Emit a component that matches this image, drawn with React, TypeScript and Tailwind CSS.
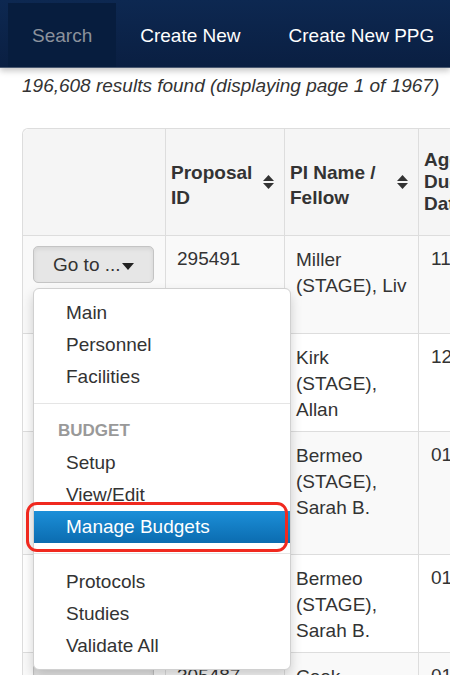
import React from 'react';

type Row = { id: string; name: string[]; due: string; h: string; striped: boolean };

const ROWS: Row[] = [
  { id: '295491', name: ['Miller', '(STAGE), Liv'], due: '11/30/2018', h: 'h-[98px]', striped: true },
  { id: '295490', name: ['Kirk', '(STAGE),', 'Allan'], due: '12/01/2018', h: 'h-[98px]', striped: false },
  { id: '295489', name: ['Bermeo', '(STAGE),', 'Sarah B.'], due: '01/02/2019', h: 'h-[123px]', striped: true },
  { id: '295488', name: ['Bermeo', '(STAGE),', 'Sarah B.'], due: '01/02/2019', h: 'h-[98px]', striped: false },
  { id: '305487', name: ['Cook', '(STAGE),', 'Tim'], due: '01/15/2019', h: 'h-[98px]', striped: true },
];

function SortIcon() {
  return (
    <svg width="11" height="14" viewBox="0 0 11 14" className="self-center shrink-0 mr-[10px]">
      <path d="M5.5 0 L11 6 L0 6 Z" fill="#333" />
      <path d="M0 8 L11 8 L5.5 14 Z" fill="#333" />
    </svg>
  );
}

function GoButton() {
  return (
    <button className="w-[121px] h-[37px] flex items-center pl-[19px] bg-[#e6e6e6] border border-[#c4c4c4] rounded-[5px] shadow-[inset_0_2px_4px_rgba(0,0,0,0.08)] text-[19px] text-[#333] whitespace-nowrap">
      <span>Go to ...</span>
      <span className="ml-[1px] mt-[4px] w-0 h-0 border-t-[7px] border-t-[#222] border-x-[6px] border-x-transparent" />
    </button>
  );
}

function MenuItem({ label, active }: { label: string; active?: boolean }) {
  return (
    <div
      className={
        active
          ? 'h-[32px] flex items-center pl-[32px] text-[19px] text-white bg-gradient-to-b from-[#1c8fd8] to-[#0b6cb0]'
          : 'h-[32px] flex items-center pl-[32px] text-[19px] text-[#333]'
      }
    >
      {label}
    </div>
  );
}

function Menu() {
  return (
    <div className="absolute left-0 top-[42px] w-[258px] bg-white border border-[#d0d0d0] rounded-[6px] shadow-[0_6px_12px_rgba(0,0,0,0.18)] pt-[8px] pb-[7px] z-10">
      <MenuItem label="Main" />
      <MenuItem label="Personnel" />
      <MenuItem label="Facilities" />
      <div className="h-px bg-[#e5e5e5] mt-[10px] mb-[11px]" />
      <div className="h-[32px] flex items-center pl-[24px] text-[17px] font-bold text-[#999]">BUDGET</div>
      <MenuItem label="Setup" />
      <MenuItem label="View/Edit" />
      <MenuItem label="Manage Budgets" active />
      <div className="h-px bg-[#e5e5e5] mt-[10px] mb-[12px]" />
      <MenuItem label="Protocols" />
      <MenuItem label="Studies" />
      <MenuItem label="Validate All" />
    </div>
  );
}

export default function App() {
  return (
    <div className="relative w-[450px] h-[675px] overflow-hidden bg-white text-[#333] font-['Liberation_Sans',Arial,sans-serif]">
      {/* Top navigation */}
      <nav className="h-[68px] flex pl-[8px] pt-[3px] bg-gradient-to-b from-[#0d2851] to-[#0a1f42] border-b border-[#4b5a72] shadow-[0_3px_6px_rgba(0,0,0,0.22)] relative z-20">
        <a className="shrink-0 flex items-center pt-[2px] px-[24px] bg-[#071d3e] text-[19px] text-[#8b929c] whitespace-nowrap">Search</a>
        <a className="shrink-0 flex items-center pt-[2px] px-[24px] text-[19px] text-white whitespace-nowrap">Create New</a>
        <a className="shrink-0 flex items-center pt-[2px] px-[24px] text-[19px] text-white whitespace-nowrap">Create New PPG</a>
      </nav>

      <p className="mt-[5px] pl-[22px] text-[19px] italic leading-[26px] whitespace-nowrap">
        196,608 results found (displaying page 1 of 1967)
      </p>

      {/* Results table */}
      <div className="mt-[29px] ml-[22px] w-[700px] border-l border-t border-[#ddd] rounded-tl-[6px]">
        <div className="h-[107px] flex bg-[#f5f5f5] border-b border-[#ddd] rounded-tl-[6px] font-bold text-[19px]">
          <div className="w-[143px] shrink-0 border-r border-[#ddd]" />
          <div className="w-[119px] shrink-0 border-r border-[#ddd] flex">
            <div className="flex-1 flex flex-col justify-end pl-[5px] pb-[25px] leading-[25px]">
              <span>Proposal</span>
              <span>ID</span>
            </div>
            <SortIcon />
          </div>
          <div className="w-[134px] shrink-0 border-r border-[#ddd] flex">
            <div className="flex-1 flex flex-col justify-end pl-[5px] pb-[25px] leading-[25px]">
              <span>PI Name /</span>
              <span>Fellow</span>
            </div>
            <SortIcon />
          </div>
          <div className="w-[150px] shrink-0 border-r border-[#ddd] flex flex-col justify-end pl-[5px] pb-[20px] leading-[22px]">
            <span>Agency</span>
            <span>Due</span>
            <span>Date</span>
          </div>
        </div>

        {ROWS.map((r, i) => (
          <div
            key={r.id + i}
            className={`${r.h} flex border-b border-[#ddd] text-[19px] leading-[26px] ${r.striped ? 'bg-[#f9f9f9]' : 'bg-white'}`}
          >
            <div className="w-[143px] shrink-0 border-r border-[#ddd] pl-[10px] pt-[10px]">
              <div className="relative w-[121px]">
                <GoButton />
                {i === 0 && <Menu />}
              </div>
            </div>
            <div className="w-[119px] shrink-0 border-r border-[#ddd] pl-[11px] pt-[10px]">{r.id}</div>
            <div className="w-[134px] shrink-0 border-r border-[#ddd] pl-[11px] pt-[11px] whitespace-nowrap">
              {r.name.map((n, k) => (
                <div key={k}>{n}</div>
              ))}
            </div>
            <div className="w-[150px] shrink-0 border-r border-[#ddd] pl-[12px] pt-[10px]">{r.due}</div>
          </div>
        ))}
      </div>

      {/* Annotation highlight */}
      <div className="absolute left-[26px] top-[502px] w-[262px] h-[50px] border-[3px] border-[#f0291f] rounded-[11px] z-30" />
    </div>
  );
}
